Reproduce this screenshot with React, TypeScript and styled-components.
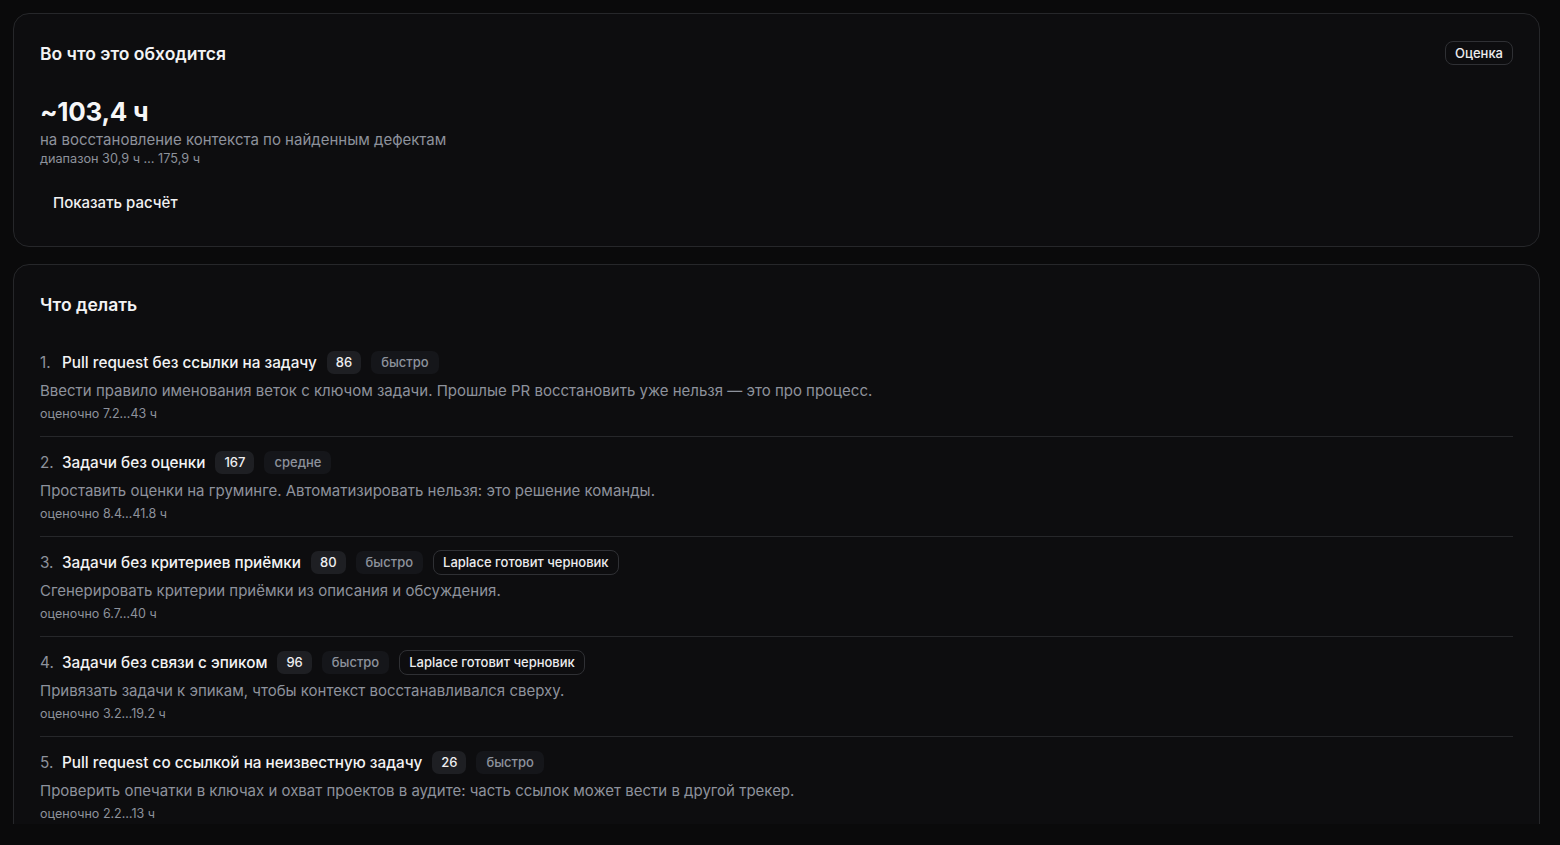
import styled, { createGlobalStyle } from 'styled-components';

const GlobalStyle = createGlobalStyle`
    html, body {
        margin: 0;
        padding: 0;
        background: #0a0a0b;
        font-family: Inter, 'Noto Sans', sans-serif;
        color: #f1f1f2;
        -webkit-font-smoothing: antialiased;
    }
`;

const Page = styled.div`
    height: 824px;
    overflow: hidden;
    padding: 13px 20px 0 13px;
    box-sizing: border-box;
    display: flex;
    flex-direction: column;
    gap: 17px;
`;

const Card = styled.section`
    background: #0d0d0f;
    border: 1px solid #26272a;
    border-radius: 16px;
    padding: 26px 26px 30px 26px;
    flex-shrink: 0;
`;

const CardHead = styled.div`
    display: flex;
    align-items: center;
    justify-content: space-between;
    height: 26px;
`;

const CardTitle = styled.h2`
    margin: 0;
    font-size: 17.5px;
    font-weight: 600;
    color: #f3f3f4;
`;

const OutlineBadge = styled.span`
    display: inline-flex;
    align-items: center;
    height: 22px;
    padding: 0 9px;
    border: 1px solid #2f3034;
    border-radius: 8px;
    font-size: 13px;
    font-weight: 500;
    color: #ececee;
    white-space: nowrap;
`;

const DraftBadge = styled(OutlineBadge)`
    height: 23px;
    font-size: 13px;
`;

const Total = styled.div`
    margin-top: 30px;
    font-size: 26px;
    font-weight: 700;
    letter-spacing: -0.3px;
    line-height: 32px;
    color: #f6f6f7;
`;

const Muted = styled.div`
    font-size: 15px;
    line-height: 20px;
    color: #8d929c;
    margin-top: 2px;
`;

const Range = styled.div`
    font-size: 12.7px;
    line-height: 18px;
    color: #8d929c;
`;

const GhostButton = styled.button`
    margin-top: 21px;
    background: transparent;
    border: none;
    padding: 4px 13px;
    font-family: inherit;
    font-size: 15px;
    font-weight: 500;
    color: #f1f1f2;
    cursor: pointer;
`;

const List = styled.ol`
    list-style: none;
    margin: 33px 0 0 0;
    padding: 0;
`;

const Item = styled.li`
    padding: 13px 0 13px 0;
    border-bottom: 1px solid #26272a;

    &:first-child {
        padding-top: 0;
    }
`;

const TitleRow = styled.div`
    display: flex;
    align-items: center;
    gap: 10px;
    height: 24px;
`;

const ItemTitle = styled.span`
    font-size: 15.3px;
    font-weight: 500;
    color: #f3f3f4;
`;

const Num = styled.span`
    display: inline-block;
    min-width: 22px;
    color: #8d929c;
    font-weight: 400;
`;

const Pill = styled.span<{ tone: 'count' | 'speed' }>`
    display: inline-flex;
    align-items: center;
    height: 23px;
    padding: 0 ${({ tone }) => (tone === 'count' ? '9px' : '10px')};
    border-radius: 7px;
    font-size: 13px;
    font-weight: 500;
    background: ${({ tone }) => (tone === 'count' ? '#1e1f23' : '#15161a')};
    color: ${({ tone }) => (tone === 'count' ? '#eeeef0' : '#8d929c')};
`;

const Desc = styled.div`
    margin-top: 6px;
    font-size: 15px;
    line-height: 22px;
    color: #8d929c;
`;

const Estimate = styled.div`
    margin-top: 3px;
    font-size: 12.5px;
    line-height: 18px;
    color: #8d929c;
`;

type Step = {
    title: string;
    count: number;
    speed: string;
    draft?: boolean;
    text: string;
    estimate: string;
};

const steps: Step[] = [
    {
        title: 'Pull request без ссылки на задачу',
        count: 86,
        speed: 'быстро',
        text: 'Ввести правило именования веток с ключом задачи. Прошлые PR восстановить уже нельзя — это про процесс.',
        estimate: 'оценочно 7.2…43 ч'
    },
    {
        title: 'Задачи без оценки',
        count: 167,
        speed: 'средне',
        text: 'Проставить оценки на груминге. Автоматизировать нельзя: это решение команды.',
        estimate: 'оценочно 8.4…41.8 ч'
    },
    {
        title: 'Задачи без критериев приёмки',
        count: 80,
        speed: 'быстро',
        draft: true,
        text: 'Сгенерировать критерии приёмки из описания и обсуждения.',
        estimate: 'оценочно 6.7…40 ч'
    },
    {
        title: 'Задачи без связи с эпиком',
        count: 96,
        speed: 'быстро',
        draft: true,
        text: 'Привязать задачи к эпикам, чтобы контекст восстанавливался сверху.',
        estimate: 'оценочно 3.2…19.2 ч'
    },
    {
        title: 'Pull request со ссылкой на неизвестную задачу',
        count: 26,
        speed: 'быстро',
        text: 'Проверить опечатки в ключах и охват проектов в аудите: часть ссылок может вести в другой трекер.',
        estimate: 'оценочно 2.2…13 ч'
    }
];

const App = () => (
    <>
        <GlobalStyle />
        <Page>
            <Card>
                <CardHead>
                    <CardTitle>Во что это обходится</CardTitle>
                    <OutlineBadge>Оценка</OutlineBadge>
                </CardHead>
                <Total>~103,4 ч</Total>
                <Muted>на восстановление контекста по найденным дефектам</Muted>
                <Range>диапазон 30,9 ч … 175,9 ч</Range>
                <GhostButton>Показать расчёт</GhostButton>
            </Card>
            <Card>
                <CardHead>
                    <CardTitle>Что делать</CardTitle>
                </CardHead>
                <List>
                    {steps.map((s, i) => (
                        <Item key={s.title}>
                            <TitleRow>
                                <ItemTitle>
                                    <Num>{i + 1}.</Num>
                                    {s.title}
                                </ItemTitle>
                                <Pill tone='count'>{s.count}</Pill>
                                <Pill tone='speed'>{s.speed}</Pill>
                                {s.draft && <DraftBadge>Laplace готовит черновик</DraftBadge>}
                            </TitleRow>
                            <Desc>{s.text}</Desc>
                            <Estimate>{s.estimate}</Estimate>
                        </Item>
                    ))}
                </List>
            </Card>
        </Page>
    </>
);

export default App;
